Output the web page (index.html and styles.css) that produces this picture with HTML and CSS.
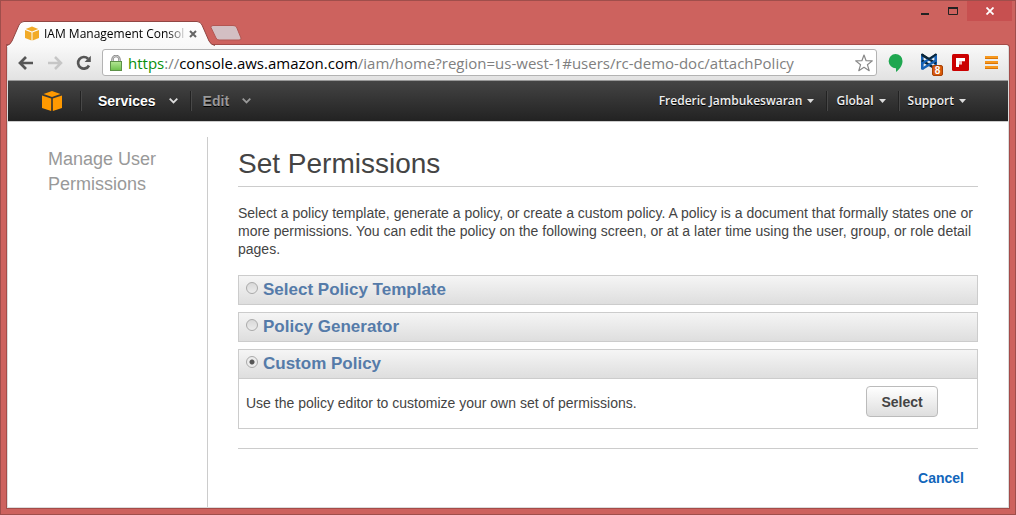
FILE: index.html
```html
<!DOCTYPE html>
<html lang="en">
<head>
<meta charset="utf-8">
<title>IAM Management Console</title>
<link rel="stylesheet" href="styles.css">
</head>
<body>
<div class="window">
  <div class="titlebar">
    <div class="tab">
      <svg class="tab-shape" width="208" height="26" viewBox="0 0 208 26" aria-hidden="true">
        <defs><linearGradient id="tabfill" x1="0" y1="0" x2="0" y2="1"><stop offset="0" stop-color="#fff"/><stop offset="1" stop-color="#f8f8f8"/></linearGradient></defs>
        <path d="M0 26V24.500Q3 24 5 20L12 4Q13.500 .5 17 .5H190Q193.500 .5 195 4L202 20Q204 24 208 24.500V26Z" fill="url(#tabfill)"/>
        <path d="M0 24.500Q3 24 5 20L12 4Q13.500 .5 17 .5H190Q193.500 .5 195 4L202 20Q204 24 208 24.500" fill="none" stroke="#914643"/>
      </svg>
      <svg class="favicon" width="14" height="15" viewBox="0 0 20 20" aria-hidden="true"><g fill="#f2ab27"><path d="M1 3.500 10 0l9 3.500L10 7Z"/><path d="M0 5l9.300 3.400V20L0 16.500Z"/><path d="M20 5l-9.300 3.400V20L20 16.500Z"/></g></svg>
      <span class="tab-title">IAM Management Consol</span>
      <button class="tab-close" aria-label="Close tab"><svg width="8" height="8" viewBox="0 0 8 8"><path d="M1 1l6 6M7 1 1 7" stroke="#666" stroke-width="2"/></svg></button>
    </div>
    <button class="new-tab" aria-label="New tab"><svg width="32" height="16" viewBox="0 0 32 16"><path d="M3 .5H23Q25.500 .5 26.500 2L31 13Q31.500 15 29 15H9Q7 15 6 13L1 2.500Q.5 .5 3 .5Z" fill="#d3bfc3" stroke="#b35652"/></svg></button>
    <div class="window-controls">
      <button class="win-btn" aria-label="Minimize"><svg width="8" height="10" viewBox="0 0 8 10"><path d="M0 8h8" stroke="#222" stroke-width="2"/></svg></button>
      <button class="win-btn" aria-label="Maximize"><svg width="10" height="8" viewBox="0 0 10 8"><path d="M.5 1v6.500h9V1" fill="none" stroke="#222"/><path d="M0 1h10" stroke="#222" stroke-width="2"/></svg></button>
      <button class="win-btn win-close" aria-label="Close"><svg width="8" height="8" viewBox="0 0 8 8"><path d="M.5 .5l7 7M7.500 .5l-7 7" stroke="#fff" stroke-width="1.800"/></svg></button>
    </div>
  </div>

  <div class="frame">
    <div class="toolbar">
      <button class="tool" aria-label="Back"><svg width="16" height="14" viewBox="0 0 16 14"><path d="M8 1 2 7l6 6M2 7h13" fill="none" stroke="#565656" stroke-width="2.700"/></svg></button>
      <button class="tool" aria-label="Forward"><svg width="16" height="14" viewBox="0 0 16 14"><path d="M8 1l6 6-6 6M14 7H1" fill="none" stroke="#c6c6c6" stroke-width="2.500"/></svg></button>
      <button class="tool" aria-label="Reload"><svg width="16" height="16" viewBox="0 0 16 16"><path d="M12 3.700A5.800 5.800 0 1 0 13 10.500" fill="none" stroke="#565656" stroke-width="2.700"/><path d="M14.800 .8V7H8.600Z" fill="#565656"/></svg></button>
      <div class="omnibox">
        <svg class="lock" width="12" height="16" viewBox="0 0 12 16" aria-hidden="true"><defs><linearGradient id="lk" x1="0" y1="0" x2="0" y2="1"><stop offset="0" stop-color="#b4e795"/><stop offset="1" stop-color="#6dc04b"/></linearGradient></defs><path d="M2.500 8V4.500a3.500 3.500 0 0 1 7 0V8" fill="none" stroke="#888" stroke-width="2.500"/><path d="M2.500 8V4.500a3.500 3.500 0 0 1 7 0V8" fill="none" stroke="#ddd" stroke-width=".8"/><rect x=".5" y="6.500" width="11" height="9" fill="url(#lk)" stroke="#5d9148"/></svg>
        <div class="url" role="textbox" aria-label="Address" contenteditable="true" spellcheck="false"><span class="scheme">https</span>://<span class="host">console.aws.amazon.com</span>/iam/home?region=us-west-1#users/rc-demo-doc/attachPolicy</div>
        <button class="star" aria-label="Bookmark"><svg width="18" height="18" viewBox="0 0 18 18"><path d="M9 1l2.100 5.700 6.200.2-4.900 3.800 1.800 6-5.200-3.400-5.200 3.400 1.800-6L.7 6.900l6.200-.2Z" fill="#fff" stroke="#888" stroke-width="1.200" stroke-linejoin="round"/></svg></button>
      </div>
      <button class="ext" aria-label="Hangouts"><svg width="16" height="18" viewBox="0 0 16 18"><path d="M7.500 0a7 7 0 0 1 7 7.200C14.500 11.500 11.500 15 8 18v-3.800A7 7 0 1 1 7.500 0Z" fill="#1fa750"/></svg></button>
      <button class="ext ext-bow" aria-label="Extension, 8 notifications"><svg width="24" height="25" viewBox="0 0 24 25"><g fill="none" stroke-width="2.600"><path d="M2.300 2v15.500M15.700 2v15.500" stroke="#1762b5"/><path d="M2 3l14 8.500M2 8.500 16 17" stroke="#0a2537"/><path d="M16 3 2 11.500M16 8.500 2 17" stroke="#1762b5"/><path d="M1.500 2l7.500 5 7.500-5" stroke="#0a2537" stroke-width="2"/></g><rect x="12.500" y="13.500" width="10" height="10" rx="1.500" fill="#d8590b" stroke="#a74105"/><text x="17.500" y="22" text-anchor="middle" class="badge-text">8</text></svg></button>
      <button class="ext" aria-label="Flipboard"><svg width="17" height="17" viewBox="0 0 17 17"><rect width="17" height="17" rx="1.500" fill="#cb0000"/><path d="M4 4h9v3.300h-3v3H7V13H4Z" fill="#fff"/><path d="M7 7h3v3.300H7Z" fill="#f0b6b6"/></svg></button>
      <button class="ext menu" aria-label="Menu"><svg width="13" height="13" viewBox="0 0 13 13"><path d="M0 1.500h13M0 6.500h13M0 11.500h13" stroke="#f7981d" stroke-width="3"/><path d="M0 2.500h13M0 7.500h13M0 12.500h13" stroke="#d87508"/></svg></button>
    </div>

    <nav class="console-nav">
      <a class="logo" href="#" aria-label="Console home"><svg width="20" height="20" viewBox="0 0 20 20"><g fill="#f90"><path d="M1.500 3 10 0l8.500 3L10 6Z"/><path d="M0 4.500l9.200 3V20L0 17Z"/><path d="M20 4.500l-9.200 3V20L20 17Z"/></g></svg></a>
      <button class="nav-btn services">Services <svg width="9" height="6" viewBox="0 0 9 6"><path d="M.7 .7l3.800 3.800L8.300 .7" fill="none" stroke="#ddd" stroke-width="1.800"/></svg></button>
      <button class="nav-btn edit">Edit <svg width="9" height="6" viewBox="0 0 9 6"><path d="M.7 .7l3.800 3.800L8.300 .7" fill="none" stroke="#999" stroke-width="1.800"/></svg></button>
      <div class="account">
        <button class="acc-btn">Frederic Jambukeswaran <svg width="7" height="4" viewBox="0 0 7 4"><path d="M0 0h7L3.500 4Z" fill="#ddd"/></svg></button>
        <button class="acc-btn">Global <svg width="7" height="4" viewBox="0 0 7 4"><path d="M0 0h7L3.500 4Z" fill="#ddd"/></svg></button>
        <button class="acc-btn">Support <svg width="7" height="4" viewBox="0 0 7 4"><path d="M0 0h7L3.500 4Z" fill="#ddd"/></svg></button>
      </div>
    </nav>

    <div class="page">
      <aside class="sidebar">Manage User Permissions</aside>
      <main class="content">
        <h1>Set Permissions</h1>
        <p class="intro">Select a policy template, generate a policy, or create a custom policy. A policy is a document that formally states one or more permissions. You can edit the policy on the following screen, or at a later time using the user, group, or role detail pages.</p>
        <form class="options">
          <section class="option">
            <label class="option-head"><input type="radio" name="policy">Select Policy Template</label>
          </section>
          <section class="option">
            <label class="option-head"><input type="radio" name="policy">Policy Generator</label>
          </section>
          <section class="option">
            <label class="option-head"><input type="radio" name="policy" checked>Custom Policy</label>
            <div class="option-body">
              <p>Use the policy editor to customize your own set of permissions.</p>
              <button class="select-btn" type="button">Select</button>
            </div>
          </section>
        </form>
        <div class="actions"><a href="#">Cancel</a></div>
      </main>
    </div>
  </div>
</div>
</body>
</html>
```
FILE: styles.css
```css
* { box-sizing: border-box; }
body {
  margin: 0;
  font: 14px/18px "Liberation Sans", Arial, sans-serif;
  color: #444;
}
button {
  margin: 0;
  padding: 0;
  border: 0;
  background: none;
  font: inherit;
  color: inherit;
}
svg { display: block; flex: none; }

.window {
  display: flex;
  flex-direction: column;
  min-height: 100vh;
  padding: 0 6px 6px;
  border: 1px solid #9f4e4b;
  background: #cd625e;
}
.titlebar {
  display: flex;
  align-items: flex-end;
  height: 44px;
}
.tab {
  position: relative;
  z-index: 1;
  display: flex;
  align-items: center;
  width: 208px;
  height: 25px;
  margin-bottom: -1px;
  padding: 0 18px;
}
.tab-shape { position: absolute; top: 0; left: 0; }
.favicon { position: relative; }
.tab-title {
  position: relative;
  flex: 1;
  min-width: 0;
  margin-left: 5px;
  white-space: nowrap;
  font: 12px/18px "Open Sans", sans-serif;
  color: transparent;
  background: linear-gradient(to right, #000 88%, #ccc);
  background-clip: text;
}
.tab-close { position: relative; margin-left: 5px; }
.new-tab { margin: 0 0 4px -5px; }
.window-controls {
  display: flex;
  align-self: flex-start;
  margin: 0 -3px 0 auto;
}
.win-btn {
  display: flex;
  align-items: center;
  justify-content: center;
  width: 28px;
  height: 20px;
}
.win-close { width: 45px; background: #c75050; }

.frame {
  display: flex;
  flex: 1;
  flex-direction: column;
  border: 1px solid #dcdcdc;
  border-top: 0;
  border-radius: 0 3px 0 0;
  background: #fff;
  box-shadow: 0 0 0 1px #a34c49;
}
.toolbar {
  display: flex;
  align-items: center;
  height: 36px;
  padding: 0 8px 0 10px;
  border-bottom: 1px solid #999;
  border-radius: 0 3px 0 0;
  background: linear-gradient(#f9f9f9, #e2e2e2);
}
.tool {
  display: flex;
  align-items: center;
  width: 29px;
}
.omnibox {
  display: flex;
  flex: 1;
  align-items: center;
  min-width: 0;
  height: 27px;
  margin: 0 11px 0 -3px;
  padding: 0 3px 0 7px;
  border: 1px solid #b3b3b3;
  border-radius: 3px;
  background: #fff;
}
.url {
  flex: 1;
  min-width: 0;
  margin-left: 6px;
  overflow: hidden;
  white-space: nowrap;
  font: 15px/24px "Open Sans", sans-serif;
  color: #808080;
}
.scheme { color: #0a8f0a; }
.host { color: #000; }
.ext { margin-right: 16px; }
.ext-bow { margin: 3px 8px 0 0; }
.ext.menu { margin-right: 0; }
.badge-text { font: bold 10px "Liberation Sans", sans-serif; fill: #fff; }
.menu { padding-right: 2px; }

.console-nav {
  display: flex;
  align-items: center;
  height: 41px;
  padding: 0 30px 0 34px;
  border-bottom: 1px solid #ccc;
  background: linear-gradient(#444, #222);
}
.nav-btn, .acc-btn {
  display: flex;
  align-items: center;
  height: 20px;
  border-left: 1px solid #222;
  box-shadow: inset 1px 0 #484848;
  text-shadow: 0 1px #000;
}
.nav-btn { gap: 13px; font-weight: bold; color: #fff; }
.services { margin-left: 18px; padding: 0 12px 0 17px; }
.edit { padding-left: 12px; color: #999; }
.account { display: flex; margin-left: auto; }
.acc-btn {
  gap: 5px;
  padding: 0 12px 0 9px;
  font: 600 12px/18px "Open Sans", sans-serif;
  color: #eee;
}
.acc-btn:first-child { border-left: 0; box-shadow: none; }

.page {
  display: flex;
  flex: 1;
  padding: 15px 30px 0 40px;
}
.sidebar {
  width: 159px;
  flex: none;
  padding: 10px 40px 0 0;
  font-size: 18px;
  line-height: 25px;
  color: #999;
}
.content {
  flex: 1;
  min-width: 0;
  padding: 10px 0 18px 30px;
  border-left: 1px solid #ccc;
}
h1 {
  margin: 0 0 17px;
  padding-bottom: 6px;
  border-bottom: 1px solid #ccc;
  font-size: 28px;
  font-weight: normal;
  line-height: 33px;
}
p { margin: 0; }
.intro { margin-bottom: 17px; }
.options {
  display: flex;
  flex-direction: column;
  gap: 7px;
}
.option { border: 1px solid #ccc; }
.option-head {
  display: flex;
  align-items: center;
  height: 28px;
  padding-left: 7px;
  background: linear-gradient(#f5f5f5, #dedede);
  font-size: 17px;
  font-weight: bold;
  color: #557ba9;
}
.option-head input {
  appearance: none;
  width: 12px;
  height: 12px;
  margin: 0 5px 4px 0;
  border: 1px solid #aaa;
  border-radius: 50%;
  background: linear-gradient(#d8d8d8, #ececec);
}
.option-head input:checked {
  background: radial-gradient(circle, #555 0 2px, transparent 3px), #ececec;
}
.option-body {
  display: flex;
  align-items: flex-start;
  justify-content: space-between;
  min-height: 50px;
  padding: 7px 39px 11px 7px;
  border-top: 1px solid #ccc;
}
.option-body p { padding-top: 8px; }
.select-btn {
  width: 72px;
  height: 31px;
  border: 1px solid #bbb;
  border-radius: 4px;
  background: linear-gradient(#fff, #dedede);
  font-weight: bold;
}
.actions {
  margin-top: 19px;
  padding: 20px 14px 0;
  border-top: 1px solid #ccc;
  text-align: right;
}
.actions a { font-weight: bold; color: #1166bb; text-decoration: none; }
```
